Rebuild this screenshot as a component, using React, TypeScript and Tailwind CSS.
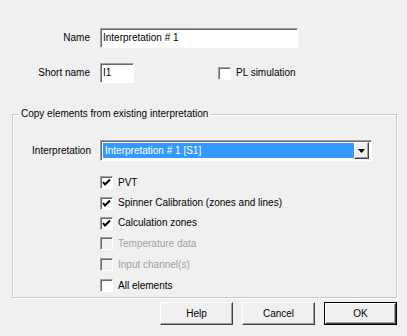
import React from "react";

const sunken =
  "border border-t-[#a0a0a0] border-l-[#a0a0a0] border-r-white border-b-white shadow-[inset_1px_1px_0_#696969]";

const raised =
  "border border-t-white border-l-white border-r-[#404040] border-b-[#404040] shadow-[inset_-1px_-1px_0_#a0a0a0]";

function Check({ checked, disabled }: { checked?: boolean; disabled?: boolean }) {
  return (
    <span
      className={`flex h-[13px] w-[13px] shrink-0 items-center justify-center ${sunken} ${
        disabled ? "bg-[#f0f0f0]" : "bg-white"
      }`}
    >
      {checked && (
        <svg width="9" height="9" viewBox="0 0 9 9">
          <path d="M1 4 L3 6.5 L8 1.5" fill="none" stroke="#000" strokeWidth="2" />
        </svg>
      )}
    </span>
  );
}

const OPTIONS = [
  { label: "PVT", checked: true, h: "h-[21px]" },
  { label: "Spinner Calibration (zones and lines)", checked: true, h: "h-[20px]" },
  { label: "Calculation zones", checked: true, h: "h-[20px]" },
  { label: "Temperature data", disabled: true, h: "h-[21px]" },
  { label: "Input channel(s)", disabled: true, h: "h-[21px]" },
  { label: "All elements", h: "h-[21px]" },
];

function Button({ children, primary }: { children: React.ReactNode; primary?: boolean }) {
  return (
    <button
      className={`h-[23px] w-[73px] bg-[#f0f0f0] text-[10px] ${
        primary ? "border border-black" : ""
      }`}
    >
      <span className={`flex h-full w-full items-center justify-center ${raised}`}>{children}</span>
    </button>
  );
}

export default function App() {
  return (
    <div
      className="h-[336px] w-[407px] overflow-hidden bg-[#f0f0f0] text-[10px] leading-[12px] text-black"
      style={{ fontFamily: '"Liberation Sans", Arial, sans-serif' }}
    >
      {/* name row */}
      <div className="flex items-center pt-[28px]">
        <span className="w-[90px] text-right">Name</span>
        <div className={`ml-[10px] flex h-[20px] w-[198px] items-center bg-white pl-[2px] ${sunken}`}>
          Interpretation # 1
        </div>
      </div>

      {/* short name row */}
      <div className="mt-[15px] flex items-center">
        <span className="w-[90px] text-right">Short name</span>
        <div className={`ml-[10px] flex h-[20px] w-[34px] items-center bg-white pl-[2px] ${sunken}`}>
          I1
        </div>
        <div className="ml-[84px] flex items-center gap-[5px]">
          <Check />
          <span>PL simulation</span>
        </div>
      </div>

      {/* group box */}
      <fieldset className="ml-[12px] mt-[25px] h-[190px] w-[385px] border border-[#c8c8c8] p-0 shadow-[inset_1px_1px_0_white,1px_1px_0_white]">
        <legend className="ml-[6px] px-[2px] leading-[12px]">
          Copy elements from existing interpretation
        </legend>

        <div className="mt-[20px] flex items-center">
          <span className="w-[78px] text-right">Interpretation</span>
          <div className={`ml-[9px] flex h-[21px] w-[272px] items-center bg-white p-[2px] ${sunken}`}>
            <div className="flex h-[15px] flex-1 items-center bg-[#3399ff] pl-[2px] text-white">
              Interpretation # 1 [S1]
            </div>
            <div className={`flex h-[17px] w-[15px] items-center justify-center bg-[#f0f0f0] ${raised}`}>
              <svg width="7" height="4" viewBox="0 0 7 4">
                <path d="M0 0 H7 L3.5 4 Z" fill="#000" />
              </svg>
            </div>
          </div>
        </div>

        <div className="ml-[87px] mt-[11px] flex flex-col">
          {OPTIONS.map((o) => (
            <div key={o.label} className={`flex items-center gap-[5px] ${o.h}`}>
              <Check checked={o.checked} disabled={o.disabled} />
              <span className={o.disabled ? "text-[#a0a0a0]" : ""}>{o.label}</span>
            </div>
          ))}
        </div>
      </fieldset>

      {/* buttons */}
      <div className="mt-[4px] flex justify-end gap-[9px] pr-[10px]">
        <Button>Help</Button>
        <Button>Cancel</Button>
        <Button primary>OK</Button>
      </div>
    </div>
  );
}
